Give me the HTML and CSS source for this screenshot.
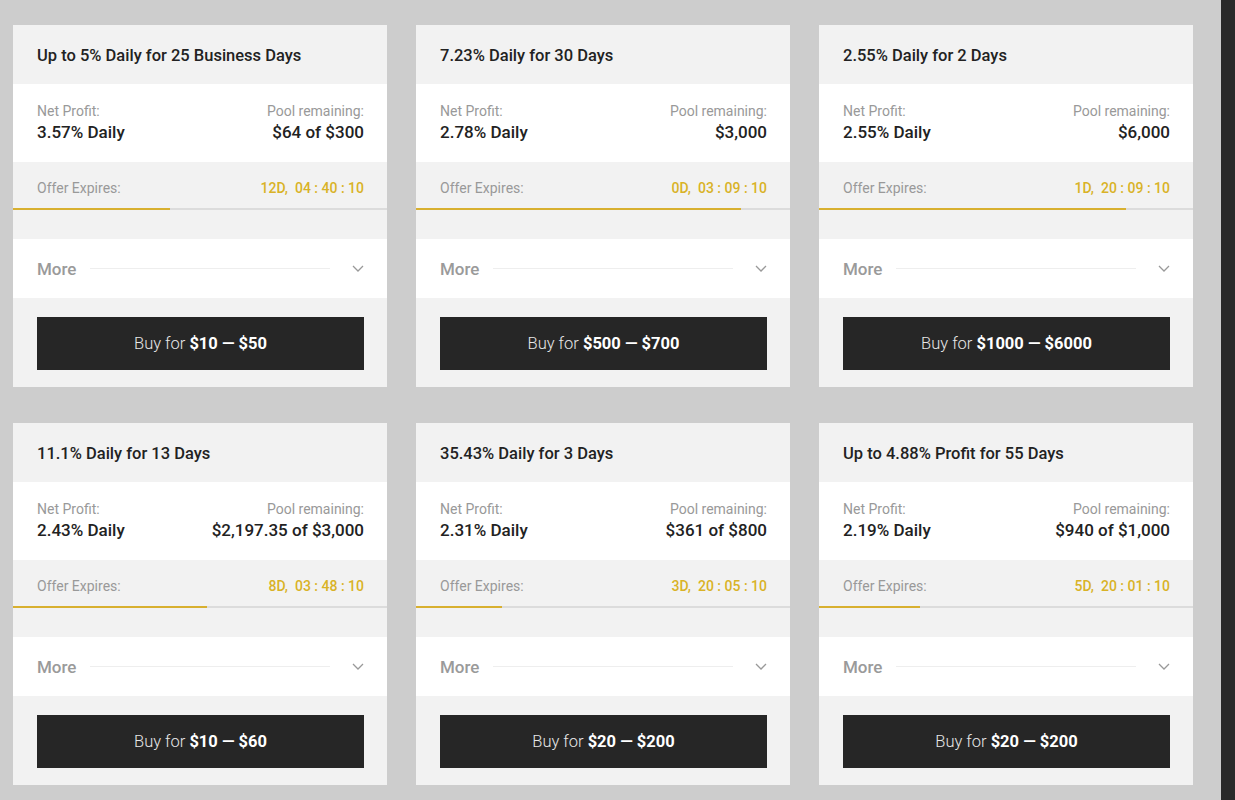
FILE: index.html
```html
<!DOCTYPE html>
<html lang="en">
  <head>
    <meta charset="UTF-8" />
    <meta name="viewport" content="width=device-width, initial-scale=1.0" />
    <title>Offers</title>
    <link rel="stylesheet" href="styles.css">
  </head>
  <body>
    <div class="page">
      <div class="offers">
        <div class="card">
          <div class="card-head">Up to 5% Daily for 25 Business Days</div>
          <div class="stats">
            <div><div class="label">Net Profit:</div><div class="value">3.57% Daily</div></div>
            <div class="right"><div class="label">Pool remaining:</div><div class="value">$64 of $300</div></div>
          </div>
          <div class="expires"><span>Offer Expires:</span><span class="timer">12D,&nbsp; 04 : 40 : 10</span></div>
          <div class="progress"><div class="bar" style="width: 42%"></div></div>
          <div class="more"><span>More</span><div class="rule"></div><svg class="chev" viewBox="0 0 12 7"><path d="M1 1l5 5 5-5"/></svg></div>
          <div class="buy-area"><button class="buy">Buy for <b>$10 — $50</b></button></div>
        </div>
        <div class="card">
          <div class="card-head">7.23% Daily for 30 Days</div>
          <div class="stats">
            <div><div class="label">Net Profit:</div><div class="value">2.78% Daily</div></div>
            <div class="right"><div class="label">Pool remaining:</div><div class="value">$3,000</div></div>
          </div>
          <div class="expires"><span>Offer Expires:</span><span class="timer">0D,&nbsp; 03 : 09 : 10</span></div>
          <div class="progress"><div class="bar" style="width: 87%"></div></div>
          <div class="more"><span>More</span><div class="rule"></div><svg class="chev" viewBox="0 0 12 7"><path d="M1 1l5 5 5-5"/></svg></div>
          <div class="buy-area"><button class="buy">Buy for <b>$500 — $700</b></button></div>
        </div>
        <div class="card">
          <div class="card-head">2.55% Daily for 2 Days</div>
          <div class="stats">
            <div><div class="label">Net Profit:</div><div class="value">2.55% Daily</div></div>
            <div class="right"><div class="label">Pool remaining:</div><div class="value">$6,000</div></div>
          </div>
          <div class="expires"><span>Offer Expires:</span><span class="timer">1D,&nbsp; 20 : 09 : 10</span></div>
          <div class="progress"><div class="bar" style="width: 82%"></div></div>
          <div class="more"><span>More</span><div class="rule"></div><svg class="chev" viewBox="0 0 12 7"><path d="M1 1l5 5 5-5"/></svg></div>
          <div class="buy-area"><button class="buy">Buy for <b>$1000 — $6000</b></button></div>
        </div>
        <div class="card">
          <div class="card-head">11.1% Daily for 13 Days</div>
          <div class="stats">
            <div><div class="label">Net Profit:</div><div class="value">2.43% Daily</div></div>
            <div class="right"><div class="label">Pool remaining:</div><div class="value">$2,197.35 of $3,000</div></div>
          </div>
          <div class="expires"><span>Offer Expires:</span><span class="timer">8D,&nbsp; 03 : 48 : 10</span></div>
          <div class="progress"><div class="bar" style="width: 52%"></div></div>
          <div class="more"><span>More</span><div class="rule"></div><svg class="chev" viewBox="0 0 12 7"><path d="M1 1l5 5 5-5"/></svg></div>
          <div class="buy-area"><button class="buy">Buy for <b>$10 — $60</b></button></div>
        </div>
        <div class="card">
          <div class="card-head">35.43% Daily for 3 Days</div>
          <div class="stats">
            <div><div class="label">Net Profit:</div><div class="value">2.31% Daily</div></div>
            <div class="right"><div class="label">Pool remaining:</div><div class="value">$361 of $800</div></div>
          </div>
          <div class="expires"><span>Offer Expires:</span><span class="timer">3D,&nbsp; 20 : 05 : 10</span></div>
          <div class="progress"><div class="bar" style="width: 23%"></div></div>
          <div class="more"><span>More</span><div class="rule"></div><svg class="chev" viewBox="0 0 12 7"><path d="M1 1l5 5 5-5"/></svg></div>
          <div class="buy-area"><button class="buy">Buy for <b>$20 — $200</b></button></div>
        </div>
        <div class="card">
          <div class="card-head">Up to 4.88% Profit for 55 Days</div>
          <div class="stats">
            <div><div class="label">Net Profit:</div><div class="value">2.19% Daily</div></div>
            <div class="right"><div class="label">Pool remaining:</div><div class="value">$940 of $1,000</div></div>
          </div>
          <div class="expires"><span>Offer Expires:</span><span class="timer">5D,&nbsp; 20 : 01 : 10</span></div>
          <div class="progress"><div class="bar" style="width: 27%"></div></div>
          <div class="more"><span>More</span><div class="rule"></div><svg class="chev" viewBox="0 0 12 7"><path d="M1 1l5 5 5-5"/></svg></div>
          <div class="buy-area"><button class="buy">Buy for <b>$20 — $200</b></button></div>
        </div>
      </div>
      <div class="side"></div>
    </div>
  </body>
</html>
```
FILE: styles.css
```css
html,
body {
  margin: 0;
  height: 100%;
  background-color: #cdcdcd;
  font-family: Roboto, "Liberation Sans", sans-serif;
  color: #222;
}
.page {
  display: flex;
  height: 800px;
  overflow: hidden;
}
.offers {
  display: grid;
  grid-template-columns: repeat(3, 374px);
  column-gap: 29px;
  row-gap: 36px;
  padding: 25px 0 0 13px;
  align-content: start;
}
.side {
  margin-left: auto;
  width: 14px;
  background-color: #2a2a2a;
}
.card {
  background-color: #f2f2f2;
  display: flex;
  flex-direction: column;
}
.card-head {
  height: 59px;
  padding: 2px 24px 0;
  box-sizing: border-box;
  display: flex;
  align-items: center;
  font-size: 16.5px;
  font-weight: 500;
  color: #222;
}
.stats {
  height: 78px;
  box-sizing: border-box;
  padding: 19px 23px 0 24px;
  background-color: #fff;
  display: flex;
  justify-content: space-between;
}
.stats .right {
  text-align: right;
}
.label {
  font-size: 14px;
  color: #999;
  line-height: 17px;
}
.value {
  font-size: 17px;
  font-weight: 500;
  line-height: 22px;
  margin-top: 1px;
}
.expires {
  height: 46px;
  box-sizing: border-box;
  padding: 5px 23px 0 24px;
  display: flex;
  align-items: center;
  justify-content: space-between;
  font-size: 14px;
  color: #999;
}
.timer {
  color: #d9b227;
  font-weight: 500;
}
.progress {
  height: 2px;
  background-color: #dcdcdc;
  margin-bottom: 29px;
}
.bar {
  height: 2px;
  background-color: #d8b030;
}
.more {
  height: 59px;
  background-color: #fff;
  padding: 0 23px 0 24px;
  display: flex;
  align-items: center;
  gap: 14px;
  font-size: 17px;
  font-weight: 500;
  color: #9a9a9a;
}
.rule {
  flex: 1;
  height: 1px;
  background-color: #eeeeee;
  margin-right: 8px;
}
.chev {
  width: 12px;
  height: 7px;
  fill: none;
  stroke: #999;
  stroke-width: 1.3;
}
.buy-area {
  padding: 19px 23px 17px 24px;
}
.buy {
  display: block;
  width: 100%;
  height: 53px;
  border: none;
  background-color: #262626;
  color: #e6e6e6;
  font-family: Roboto, "Liberation Sans", sans-serif;
  font-size: 16.5px;
  font-weight: 300;
}
.buy b {
  color: #fff;
  font-weight: 700;
}
```
